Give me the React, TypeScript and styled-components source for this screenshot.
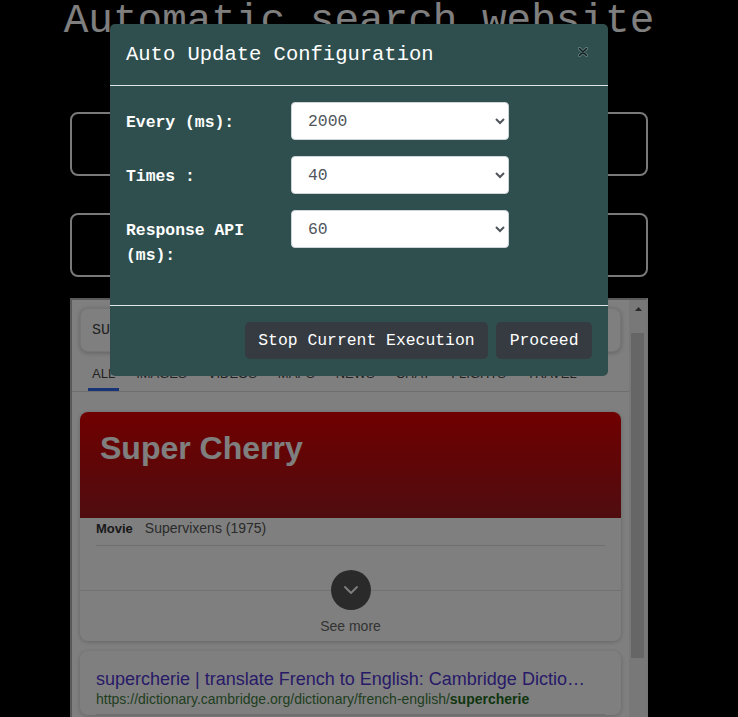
import { FC, Fragment } from 'react'
import styled, { createGlobalStyle } from 'styled-components'

const GlobalStyle = createGlobalStyle`
  html, body {
    margin: 0;
    background: #000;
    overflow: hidden;
  }
  * {
    box-sizing: border-box;
  }
`

const mono = `"Liberation Mono", "DejaVu Sans Mono", monospace`
const sans = `"Liberation Sans", Arial, sans-serif`

const Page = styled.div`
  width: 578px;
  margin-left: 70px;
  padding-top: 1px;
`

const PageTitle = styled.h1`
  margin: 0;
  display: flex;
  justify-content: center;
  white-space: nowrap;
  font-family: ${mono};
  font-size: 41px;
  line-height: 41px;
  font-weight: normal;
  color: #fff;
`

const InputBox = styled.div<{ $top: number }>`
  margin-top: ${(p) => p.$top}px;
  height: 64px;
  border: 2px solid #f2f2f2;
  border-radius: 8px;
`

const Frame = styled.div`
  margin-top: 21px;
  height: 440px;
  display: flex;
  background: #fff;
  border: 2px solid;
  border-color: #b4b4b4 #ececec #ececec #b4b4b4;
`

const FrameContent = styled.div`
  flex: 1;
  min-width: 0;
`

const Scrollbar = styled.div`
  width: 17px;
  flex-shrink: 0;
  background: #f1f1f1;
  display: flex;
  flex-direction: column;
`

const ScrollArrow = styled.div`
  height: 17px;
  display: flex;
  align-items: center;
  justify-content: center;
  padding-left: 2px;
`

const ScrollThumb = styled.div`
  margin: 16px 0 0 2px;
  width: 13px;
  height: 325px;
  background: #cdcdcd;
`

const SearchBox = styled.div`
  margin: 8px 8px 0;
  height: 44px;
  border-radius: 8px;
  background: #fff;
  border: 1px solid #ececec;
  box-shadow: 0 1px 5px rgba(32, 33, 36, 0.28);
  display: flex;
  align-items: center;
  padding-left: 11px;
  font-family: ${mono};
  font-size: 15px;
  color: #444;
`

const Tabs = styled.div`
  display: flex;
  gap: 13px;
  padding: 0 16px;
  border-bottom: 1px solid #dcdcdc;
`

const Tab = styled.div<{ $active?: boolean }>`
  padding: 14px 4px 6px;
  line-height: 16px;
  font-family: ${sans};
  font-size: 13px;
  color: #444;
  border-bottom: 3px solid ${(p) => (p.$active ? '#3366f0' : 'transparent')};
`

const Card = styled.div`
  margin: 0 8px;
  background: #fff;
  border-radius: 8px;
  box-shadow: 0 1px 5px rgba(0, 0, 0, 0.22);
  overflow: hidden;
  font-family: ${sans};
`

const EntityCard = styled(Card)`
  margin-top: 20px;
`

const ResultCard = styled(Card)`
  margin-top: 10px;
  padding: 17px 16px 0;
`

const Hero = styled.div`
  height: 106px;
  padding: 18px 20px;
  background: linear-gradient(180deg, #e00000 0%, #9e1a20 100%);
  color: #fff;
  font-size: 32px;
  font-weight: bold;
`

const InfoRow = styled.div`
  margin: 0 16px;
  padding: 1px 0 7px;
  line-height: 19px;
  font-size: 14px;
  color: #555;
  display: flex;
  align-items: baseline;
  gap: 12px;
  border-bottom: 1px solid #dedede;
`

const InfoKey = styled.span`
  font-size: 13px;
  font-weight: bold;
  color: #333;
`

const MoreArea = styled.div`
  margin-top: 44px;
  border-top: 1px solid #e5e5e5;
  display: flex;
  flex-direction: column;
  align-items: center;
  padding-bottom: 6px;
`

const MoreCircle = styled.div`
  margin-top: -21px;
  width: 40px;
  height: 40px;
  border-radius: 50%;
  background: #555;
  display: flex;
  align-items: center;
  justify-content: center;
`

const MoreText = styled.div`
  margin-top: 8px;
  line-height: 17px;
  font-size: 14px;
  color: #666;
`

const ResultTitle = styled.div`
  padding-right: 14px;
  font-size: 18px;
  line-height: 22px;
  color: #4f36d0;
  white-space: nowrap;
  overflow: hidden;
  text-overflow: ellipsis;
`

const ResultUrl = styled.div`
  font-size: 14px;
  line-height: 18px;
  color: #3f7d3f;
  padding-bottom: 6px;
  border-bottom: 1px solid #dedede;

  b {
    color: #1e6c1e;
  }
`

/* modal */

const Backdrop = styled.div`
  position: fixed;
  inset: 0;
  z-index: 10;
  background: rgba(0, 0, 0, 0.5);
  display: flex;
  justify-content: center;
  align-items: flex-start;
  padding: 24px 20px 0 0;
`

const Dialog = styled.div`
  width: 498px;
  background: #2f4f4f;
  border-radius: 5px;
  color: #fff;
  font-family: ${mono};
`

const Header = styled.div`
  display: flex;
  justify-content: space-between;
  align-items: flex-start;
  padding: 16px;
  border-bottom: 1px solid #e3e6e8;
`

const Title = styled.h5`
  margin: 0;
  font-size: 20.5px;
  line-height: 29px;
  font-weight: normal;
`

const CloseButton = styled.button`
  margin-top: 3px;
  width: 18px;
  height: 18px;
  padding: 4px;
  border: 0;
  background: transparent;
  display: flex;
  cursor: pointer;
`

const Body = styled.div`
  display: grid;
  grid-template-columns: 165px 218px;
  row-gap: 16px;
  align-items: start;
  padding: 16px 16px 37px;
`

const Label = styled.label`
  padding-top: 9px;
  font-size: 16.4px;
  line-height: 24.6px;
  font-weight: bold;
`

const Select = styled.select`
  width: 218px;
  height: 38px;
  padding: 0 12px 0 12px;
  border: 1px solid #ced4da;
  border-radius: 4px;
  background: #fff;
  color: #50565c;
  font-family: ${mono};
  font-size: 16.4px;
`

const Footer = styled.div`
  display: flex;
  justify-content: flex-end;
  gap: 8px;
  padding: 16px 16px 17px;
  border-top: 1px solid #e3e6e8;
`

const Button = styled.button`
  height: 37px;
  padding: 0 13.5px;
  border: 0;
  border-radius: 5px;
  background: #363b42;
  color: #fff;
  font-family: ${mono};
  font-size: 16.4px;
  cursor: pointer;
`

const tabs = ['ALL', 'IMAGES', 'VIDEOS', 'MAPS', 'NEWS', 'CHAT', 'FLIGHTS', 'TRAVEL']

const fields = [
  { label: 'Every (ms):', options: ['1000', '2000', '5000'], value: '2000' },
  { label: 'Times :', options: ['10', '20', '40'], value: '40' },
  { label: 'Response API (ms):', options: ['30', '60', '90'], value: '60' },
]

const App: FC = () => {
  return (
    <>
      <GlobalStyle />
      <Page>
        <PageTitle>Automatic search website</PageTitle>
        <InputBox $top={70} />
        <InputBox $top={37} />

        <Frame>
          <FrameContent>
            <SearchBox>SUPER CHERRY</SearchBox>
            <Tabs>
              {tabs.map((t, i) => (
                <Tab key={t} $active={i === 0}>
                  {t}
                </Tab>
              ))}
            </Tabs>

            <EntityCard>
              <Hero>Super Cherry</Hero>
              <InfoRow>
                <InfoKey>Movie</InfoKey>
                <span>Supervixens (1975)</span>
              </InfoRow>
              <MoreArea>
                <MoreCircle>
                  <svg width="18" height="18" viewBox="0 0 24 24" fill="none">
                    <path d="M4 8l8 8 8-8" stroke="#fff" strokeWidth="2.4" strokeLinecap="round" strokeLinejoin="round" />
                  </svg>
                </MoreCircle>
                <MoreText>See more</MoreText>
              </MoreArea>
            </EntityCard>

            <ResultCard>
              <ResultTitle>supercherie | translate French to English: Cambridge Dictionary</ResultTitle>
              <ResultUrl>
                https://dictionary.cambridge.org/dictionary/french-english/<b>supercherie</b>
              </ResultUrl>
            </ResultCard>
          </FrameContent>

          <Scrollbar>
            <ScrollArrow>
              <svg width="7" height="4" viewBox="0 0 7 4">
                <path d="M0 4L3.5 0L7 4Z" fill="#505050" />
              </svg>
            </ScrollArrow>
            <ScrollThumb />
          </Scrollbar>
        </Frame>
      </Page>

      <Backdrop>
        <Dialog>
          <Header>
            <Title>Auto Update Configuration</Title>
            <CloseButton aria-label="Close">
              <svg width="10" height="10" viewBox="0 0 10 10">
                <path d="M1.5 1.5L8.5 8.5M8.5 1.5L1.5 8.5" stroke="#a9bcbc" strokeWidth="3" strokeLinecap="round" opacity="0.55" />
                <path d="M1.5 1.5L8.5 8.5M8.5 1.5L1.5 8.5" stroke="#0e1c1c" strokeWidth="1.6" strokeLinecap="round" />
              </svg>
            </CloseButton>
          </Header>

          <Body>
            {fields.map((f) => (
              <Fragment key={f.label}>
                <Label>{f.label}</Label>
                <Select defaultValue={f.value}>
                  {f.options.map((o) => (
                    <option key={o} value={o}>
                      {o}
                    </option>
                  ))}
                </Select>
              </Fragment>
            ))}
          </Body>

          <Footer>
            <Button>Stop Current Execution</Button>
            <Button>Proceed</Button>
          </Footer>
        </Dialog>
      </Backdrop>
    </>
  )
}

export default App
